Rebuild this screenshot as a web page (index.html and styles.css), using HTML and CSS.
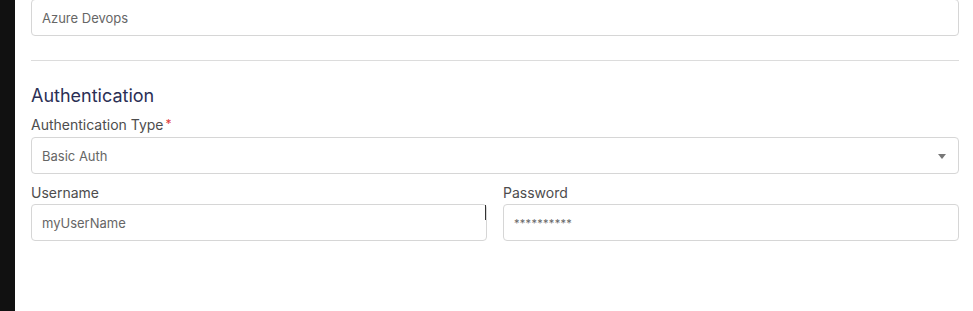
FILE: index.html
```html
<!DOCTYPE html>
<html>
<head>
<meta charset="utf-8">
<link rel="stylesheet" href="styles.css">
</head>
<body>
<div class="page">
  <aside class="sidebar"></aside>
  <main class="content">
    <div class="input top-input">Azure Devops</div>
    <hr class="divider">
    <h2 class="section-title">Authentication</h2>
    <label class="label">Authentication Type<span class="req">*</span></label>
    <div class="input select">Basic Auth<span class="caret"></span></div>
    <div class="row">
      <div class="field">
        <label class="label">Username</label>
        <div class="input with-cursor">myUserName<span class="cursor"></span></div>
      </div>
      <div class="field">
        <label class="label">Password</label>
        <div class="input password">**********</div>
      </div>
    </div>
  </main>
</div>
</body>
</html>
```

FILE: styles.css
```css
html, body {
  margin: 0;
  padding: 0;
  background: #fff;
  height: 100%;
  overflow: hidden;
}
.page {
  display: flex;
  height: 311px;
  font-family: "Inter", "Noto Sans", sans-serif;
}
.sidebar {
  width: 15px;
  flex: none;
  background: #111111;
}
.content {
  flex: 1;
  padding: 0 14px 0 16px;
  display: flex;
  flex-direction: column;
}
.input {
  position: relative;
  box-sizing: border-box;
  height: 37px;
  border: 1px solid #d6d6d6;
  border-radius: 4px;
  padding: 0 10px;
  display: flex;
  align-items: center;
  font-size: 13px;
  color: #666;
  background: #fff;
}
.top-input {
  margin-top: -1px;
  height: 37px;
}
.divider {
  margin: 24px 0 0 0;
  border: 0;
  border-top: 1px solid #dcdcdc;
  height: 0;
}
.section-title {
  margin: 24px 0 0 0;
  font-size: 18px;
  line-height: 22px;
  font-weight: 400;
  color: #2b2f55;
}
.label {
  display: block;
  font-size: 14px;
  line-height: 18px;
  color: #4d4d4d;
  margin: 8px 0 3px 0;
}
.req {
  color: #e03a3a;
  margin-left: 2px;
  font-size: 12px;
  vertical-align: 2px;
}
.select {
  height: 37px;
}
.select .caret {
  position: absolute;
  right: 12px;
  top: 16px;
  width: 0;
  height: 0;
  border-left: 4px solid transparent;
  border-right: 4px solid transparent;
  border-top: 5px solid #777;
}
.row {
  display: grid;
  grid-template-columns: 1fr 1fr;
  column-gap: 16px;
}
.row .label {
  margin: 10px 0 2px 0;
}
.with-cursor .cursor {
  position: absolute;
  right: 0;
  top: 0;
  width: 1px;
  height: 15px;
  background: #333;
}
.password {
  font-size: 11px;
  letter-spacing: 0.3px;
}
```
